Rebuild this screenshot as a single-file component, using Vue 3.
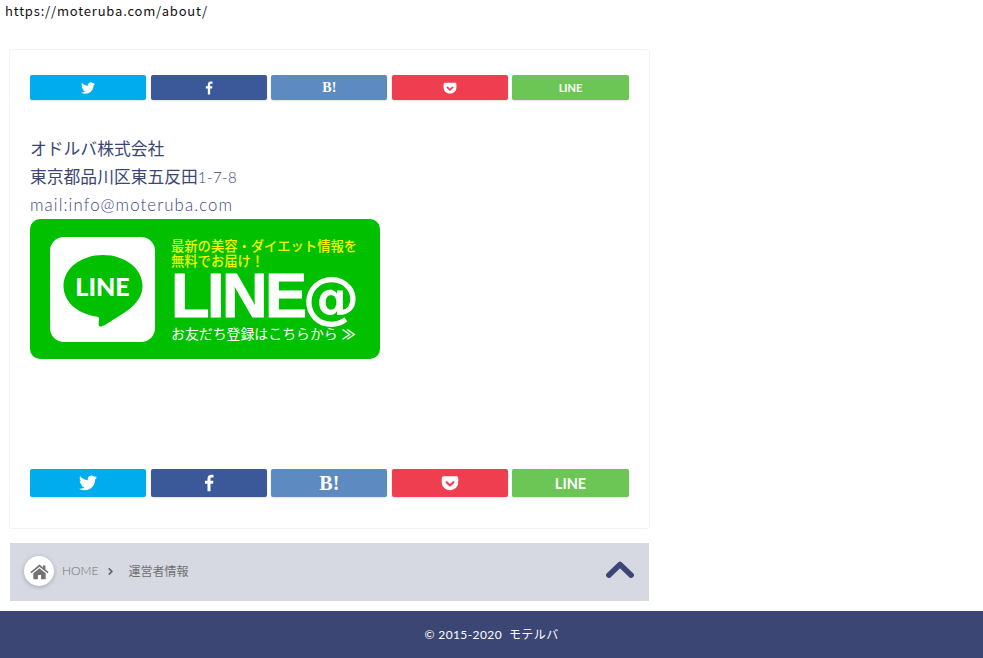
<script setup>
const twitter = 'M23.953 4.57a10 10 0 01-2.825.775 4.958 4.958 0 002.163-2.723c-.951.555-2.005.959-3.127 1.184a4.92 4.92 0 00-8.384 4.482C7.69 8.095 4.067 6.13 1.64 3.162a4.822 4.822 0 00-.666 2.475c0 1.71.87 3.213 2.188 4.096a4.904 4.904 0 01-2.228-.616v.06a4.923 4.923 0 003.946 4.827 4.996 4.996 0 01-2.212.085 4.936 4.936 0 004.604 3.417 9.867 9.867 0 01-6.102 2.105c-.39 0-.779-.023-1.17-.067a13.995 13.995 0 007.557 2.209c9.053 0 13.998-7.496 13.998-13.985 0-.21 0-.42-.015-.63A9.935 9.935 0 0024 4.59z'
const facebook = 'M14 23V13h3.4l.5-4H14V6.600c0-1.100.3-1.900 1.900-1.900H18V1.200C17.600 1.100 16.400 1 15 1c-3 0-5 1.800-5 5.100V9H6.600v4H10v10z'
const pocket = 'M3.500 3h17A2.500 2.500 0 0123 5.500V11c0 6-5 10.500-11 10.500S1 17 1 11V5.500A2.500 2.500 0 013.500 3zM7.500 9.500a1.400 1.400 0 00-1 2.400l4.500 4.300a1.500 1.500 0 002 0l4.500-4.300a1.400 1.400 0 00-2-2L12 13.200 8.500 9.900a1.400 1.400 0 00-1-.4z'

const shares = [
  { name: 'twitter', path: twitter },
  { name: 'facebook', path: facebook },
  { name: 'hatena', label: 'B!' },
  { name: 'pocket', path: pocket },
  { name: 'line', label: 'LINE' }
]
</script>

<template>
  <div class="page">
    <div class="url">https://moteruba.com/about/</div>

    <div class="wrap">
      <article class="card">
        <ul class="share">
          <li v-for="s in shares" :key="s.name" :class="s.name">
            <svg v-if="s.path" viewBox="0 0 24 24" fill="#fff" fill-rule="evenodd"><path :d="s.path" /></svg>
            <span v-else>{{ s.label }}</span>
          </li>
        </ul>

        <div class="about">
          <p>オドルバ株式会社</p>
          <p>東京都品川区東五反田<span class="num">1-7-8</span></p>
          <p class="mail">mail:info@moteruba.com</p>
        </div>

        <div class="banner">
          <div class="tile">
            <svg viewBox="0 0 80 76" width="80" height="76">
              <path fill="#00c000" d="M40 1C18 1 .500 14.500.500 32c0 15.500 14 28 33 30.500 2.500.5 3 1.500 2.500 4-.3 1.800-.9 5 .7 5.800 2 .9 6-1.600 12-5.600C60 59.500 79.500 50 79.500 32 79.500 14.500 62 1 40 1z" />
            </svg>
            <span class="tile-text">LINE</span>
          </div>
          <div class="banner-copy">
            <div class="lead">最新の美容・ダイエット情報を<br />無料でお届け！</div>
            <div class="big">LINE<span class="at">@</span></div>
            <div class="sub">お友だち登録はこちらから<span class="arrows">≫</span></div>
          </div>
        </div>

        <ul class="share share-big">
          <li v-for="s in shares" :key="s.name" :class="s.name">
            <svg v-if="s.path" viewBox="0 0 24 24" fill="#fff" fill-rule="evenodd"><path :d="s.path" /></svg>
            <span v-else>{{ s.label }}</span>
          </li>
        </ul>
      </article>

      <nav class="crumbs">
        <span class="home">
          <svg viewBox="0 0 24 24" width="19" height="19" fill="#737373">
            <path d="M12 3.200l4.500 3.700V4.500h3v4.900l4 3.300-1.300 1.500L12 5.900 1.800 14.200.5 12.700z" />
            <path d="M12 7.800l7.800 6.400V21a.9.9 0 01-.9.9h-4.900v-5.400h-4v5.400H5.100a.9.900 0 01-.9-.9v-6.800z" />
          </svg>
        </span>
        <span class="crumb-home">HOME</span>
        <svg class="sep" viewBox="0 0 8 10" width="7" height="9">
          <path d="M2 1.500L5.500 5 2 8.500" fill="none" stroke="#666" stroke-width="2" />
        </svg>
        <span class="crumb-now">運営者情報</span>
        <svg class="top" viewBox="0 0 28 18" width="28" height="18">
          <path d="M2.800 14.200L14 3.500l11.200 10.700" fill="none" stroke="#3b4675" stroke-width="5.500" stroke-linecap="round" stroke-linejoin="round" />
        </svg>
      </nav>
    </div>

    <footer class="footer">© 2015-2020 &nbsp;モテルバ</footer>
  </div>
</template>

<style scoped>
.page {
  height: 658px;
  overflow: hidden;
  font-family: Lato, "Noto Sans CJK JP", sans-serif;
}

.url {
  height: 49px;
  padding: 3px 0 0 5px;
  box-sizing: border-box;
  font-family: "Noto Sans CJK JP", sans-serif;
  font-size: 13px;
  line-height: 16px;
  letter-spacing: 0.82px;
  color: #111;
}

.wrap {
  width: 641px;
  margin-left: 9px;
}

.card {
  box-sizing: border-box;
  height: 480px;
  padding: 25px 20px 0;
  border: 1px solid #f3f3f3;
  border-radius: 3px;
}

.share {
  width: 598.7px;
  display: grid;
  grid-template-columns: repeat(5, 1fr);
  gap: 4.3px;
  margin: 0;
  padding: 0;
  list-style: none;
}

.share li {
  height: 25px;
  display: flex;
  align-items: center;
  justify-content: center;
  border-radius: 2px;
  box-shadow: 0 1px 2px rgba(0, 0, 0, 0.12);
  color: #fff;
}

.share svg {
  width: 14px;
  height: 14px;
}

.twitter { background: #00acee; }
.facebook { background: #3b5998; }
.hatena { background: #5d8ac1; }
.pocket { background: #f03e51; }
.line { background: #6cc655; }

.hatena span {
  font-family: "Liberation Serif", serif;
  font-weight: 700;
  font-size: 14px;
}

.line span {
  font-family: Lato, sans-serif;
  font-weight: 700;
  font-size: 11px;
}

.share-big {
  margin-top: 110px;
}

.share-big li {
  height: 28px;
}

.share-big svg {
  width: 18px;
  height: 18px;
}

.share-big .hatena span {
  font-size: 20px;
}

.share-big .line span {
  font-size: 14.5px;
}

.about {
  margin-top: 35px;
  color: #3b4675;
  font-size: 16.8px;
  line-height: 28px;
}

.about p {
  margin: 0;
}

.num {
  font-weight: 300;
  font-size: 15px;
  letter-spacing: 0.4px;
}

.mail {
  font-weight: 300;
  letter-spacing: 1.1px;
}

.banner {
  width: 350px;
  height: 140px;
  box-sizing: border-box;
  padding: 18px 0 0 20px;
  display: flex;
  gap: 16px;
  background: #00c000;
  border-radius: 10px;
  color: #fff;
  font-family: "Noto Sans CJK JP", sans-serif;
}

.tile {
  position: relative;
  width: 105px;
  height: 105px;
  flex: none;
  display: flex;
  align-items: center;
  justify-content: center;
  background: #fff;
  border-radius: 14px;
}

.tile svg {
  margin-top: 4px;
}

.tile-text {
  position: absolute;
  left: 0;
  right: 0;
  top: 33px;
  text-align: center;
  font-family: Lato, sans-serif;
  font-weight: 900;
  font-size: 25px;
  line-height: 32px;
  color: #fff;
}

.lead {
  margin-top: 1px;
  color: #f5f500;
  font-weight: 500;
  font-size: 13.300px;
  line-height: 15px;
}

.big {
  height: 52px;
  margin-top: 1px;
  font-family: "Liberation Sans", sans-serif;
  font-weight: 700;
  font-size: 63px;
  line-height: 52px;
  letter-spacing: -2.5px;
  white-space: nowrap;
  -webkit-text-stroke: 1px #fff;
}

.at {
  margin-left: -2px;
  font-family: "DejaVu Sans", sans-serif;
  font-size: 57px;
  letter-spacing: 0;
  -webkit-text-stroke: 0;
}

.sub {
  margin-top: 3px;
  font-weight: 400;
  font-size: 13.900px;
  line-height: 18px;
  white-space: nowrap;
}

.arrows {
  margin-left: 4px;
  font-weight: 700;
}

.crumbs {
  height: 58px;
  margin: 14px 1px 0;
  padding: 0 14px;
  display: flex;
  align-items: center;
  background: #d6d9e2;
  color: #707070;
  font-size: 12px;
  line-height: 16px;
}

.home {
  width: 30px;
  height: 30px;
  flex: none;
  display: flex;
  align-items: center;
  justify-content: center;
  margin-top: -2px;
  background: #fff;
  border-radius: 50%;
  box-shadow: 0 1px 4px rgba(0, 0, 0, 0.25);
}

.crumb-home {
  margin: -2px 0 0 8px;
  font-weight: 300;
  font-size: 12px;
}

.sep {
  margin: -1px 14px 0 9px;
}

.crumb-now {
  margin-top: -2px;
  font-family: "Noto Sans CJK JP", sans-serif;
}

.top {
  margin: -4px 1px 0 auto;
}

.footer {
  height: 47px;
  margin-top: 10px;
  background: #3b4675;
  color: #fff;
  text-align: center;
  font-size: 12px;
  line-height: 47px;
  letter-spacing: 0.4px;
}
</style>
